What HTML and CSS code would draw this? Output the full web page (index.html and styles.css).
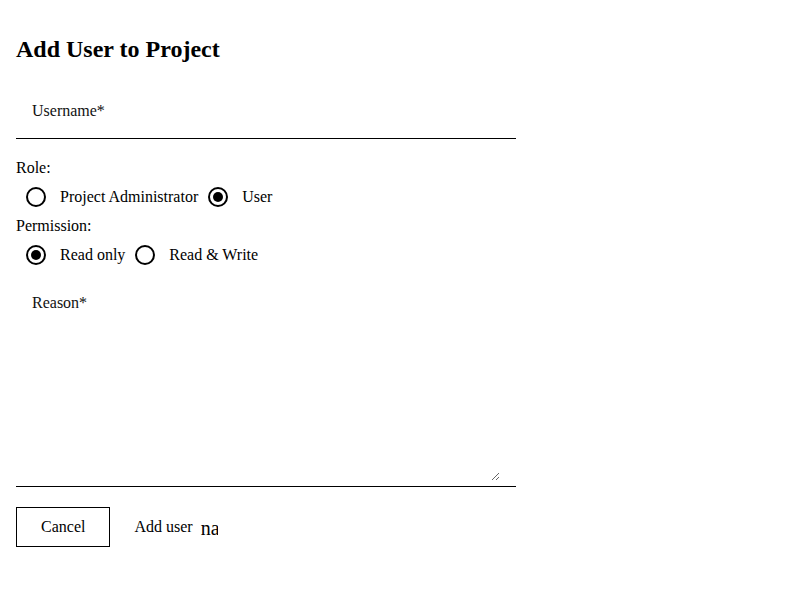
FILE: index.html
```html
<!DOCTYPE html>
<html>
<head>
<meta charset="utf-8">
<link rel="stylesheet" href="styles.css">
</head>
<body>
<div class="page">
  <h2 class="title">Add User to Project</h2>
  <div class="field">
    <label class="field-label">Username*</label>
  </div>
  <div class="group-label">Role:</div>
  <div class="radio-row">
    <span class="radio"></span><span class="radio-text">Project Administrator</span>
    <span class="radio checked"></span><span class="radio-text">User</span>
  </div>
  <div class="group-label">Permission:</div>
  <div class="radio-row">
    <span class="radio checked"></span><span class="radio-text">Read only</span>
    <span class="radio"></span><span class="radio-text">Read &amp; Write</span>
  </div>
  <div class="field field-area">
    <label class="field-label">Reason*</label>
    <textarea class="area"></textarea>
  </div>
  <div class="actions">
    <button class="btn btn-outline">Cancel</button>
    <button class="btn btn-text">Add user<span class="icon">navigate_next</span></button>
  </div>
</div>
</body>
</html>
```

FILE: styles.css
```css
html, body {
  margin: 0;
  padding: 0;
  background: #fff;
}
body {
  font-family: "Liberation Serif", "Times New Roman", serif;
  font-size: 16px;
  color: #000;
}
.page {
  padding: 16px;
  width: 500px;
}
.title {
  font-size: 24px;
  font-weight: bold;
  margin: 20px 0 20px;
}
.field {
  padding: 19px 16px 18px;
  border-bottom: 1px solid #000;
}
.field-label {
  display: block;
  color: #111;
}
.group-label {
  margin-top: 20px;
}
.radio-row + .group-label {
  margin-top: 0;
}
.radio-row {
  display: flex;
  align-items: center;
  padding: 10px 0 10px;
}
.radio {
  box-sizing: border-box;
  width: 20px;
  height: 20px;
  border: 2px solid #000;
  border-radius: 50%;
  margin-left: 10px;
  margin-right: 14px;
  display: flex;
  align-items: center;
  justify-content: center;
}
.radio.checked::after {
  content: "";
  width: 10px;
  height: 10px;
  border-radius: 50%;
  background: #000;
}
.field-area {
  padding-top: 19px;
  padding-bottom: 5px;
}
.area {
  display: block;
  box-sizing: border-box;
  width: 100%;
  height: 169px;
  border: none;
  outline: none;
  padding: 0;
  margin: 0;
  font: inherit;
  background: transparent;
}
.actions {
  display: flex;
  align-items: flex-start;
  margin-top: 20px;
}
.btn {
  box-sizing: border-box;
  height: 40px;
  font-family: "Liberation Serif", "Times New Roman", serif;
  font-size: 16px;
  background: #fff;
  color: #000;
  padding: 10px 24px;
  margin: 0;
  line-height: 18px;
  cursor: pointer;
}
.btn-outline {
  border: 1px solid #000;
}
.btn-text {
  border: 1px solid transparent;
  padding-left: 23px;
  overflow: hidden;
  width: 109px;
  text-align: left;
  white-space: nowrap;
}
.icon {
  display: inline-block;
  margin-left: 8px;
  font-size: 20px;
  line-height: 18px;
  vertical-align: -3px;
}
```
